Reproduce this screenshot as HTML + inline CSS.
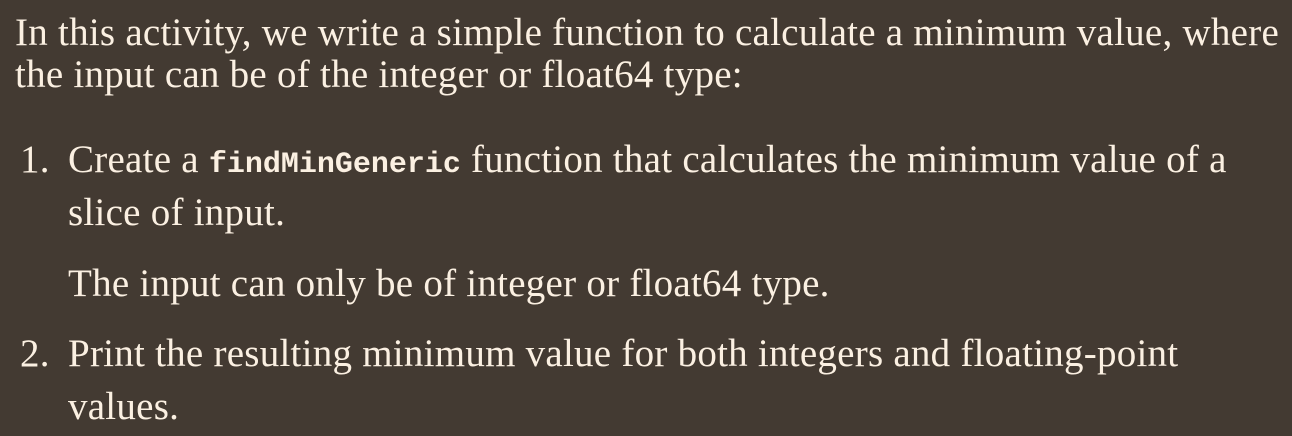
<!DOCTYPE html>
<html><head><style>
html,body{margin:0;padding:0;}
body{width:1292px;height:436px;background:#433a32;color:#fbf0e2;font-family:"Liberation Serif",serif;font-size:39px;letter-spacing:0.25px;position:relative;overflow:hidden;}
.l{position:absolute;white-space:nowrap;line-height:1;}
code{font-family:"Liberation Mono",monospace;font-weight:bold;font-size:30px;letter-spacing:0;}
</style></head><body>
<div class="l" style="left:15px;top:13px">In this activity, we write a simple function to calculate a minimum value, where</div>
<div class="l" style="left:15px;top:55px">the input can be of the integer or float64 type:</div>
<div class="l" style="left:20px;top:140px">1.</div>
<div class="l" style="left:68px;top:140px">Create a <code>findMinGeneric</code> function that calculates the minimum value of a</div>
<div class="l" style="left:68px;top:193px">slice of input.</div>
<div class="l" style="left:68px;top:264px">The input can only be of integer or float64 type.</div>
<div class="l" style="left:20px;top:334px">2.</div>
<div class="l" style="left:68px;top:334px">Print the resulting minimum value for both integers and floating-point</div>
<div class="l" style="left:68px;top:387px">values.</div>
</body></html>
